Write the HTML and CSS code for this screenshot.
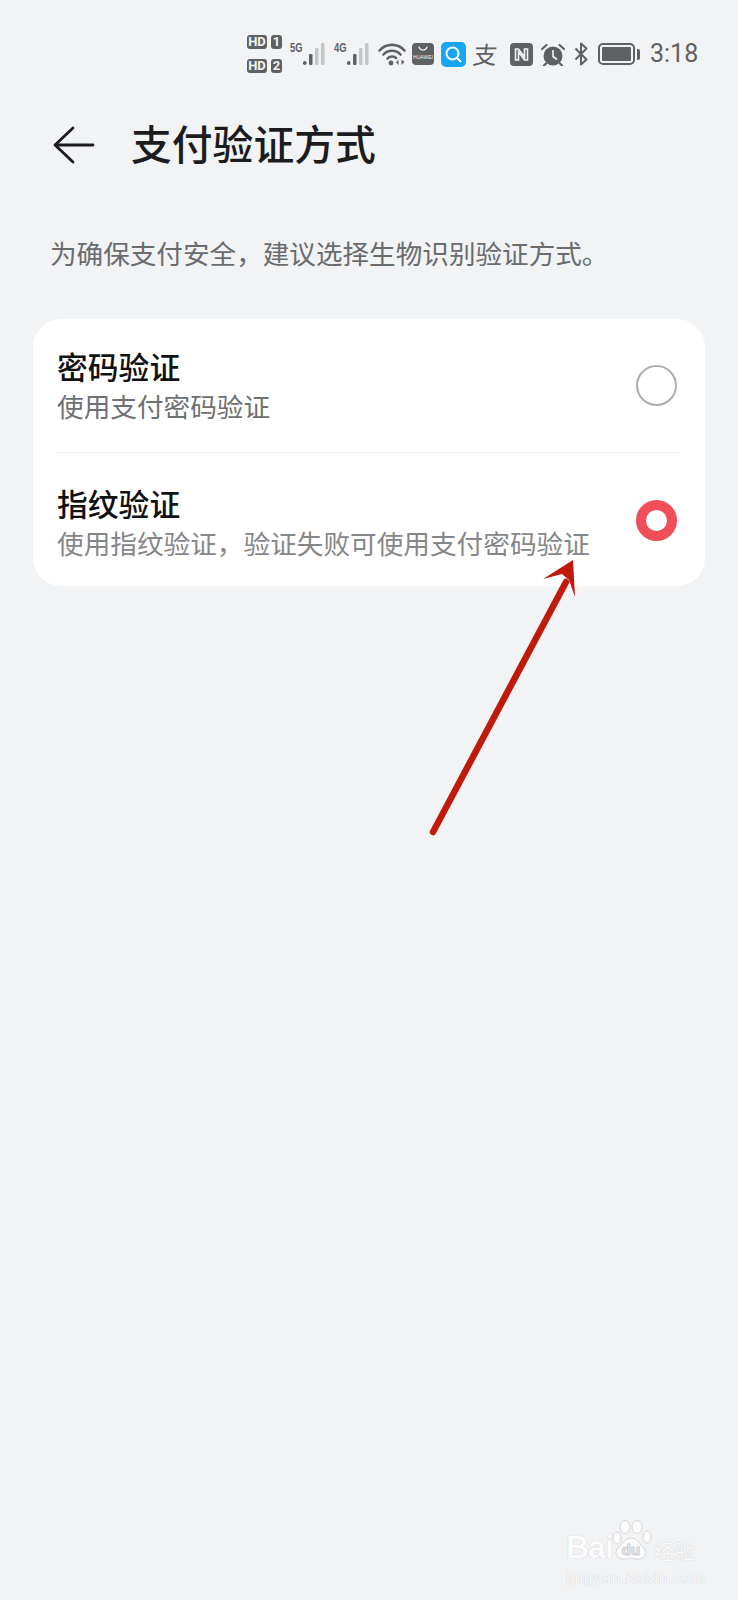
FILE: index.html
```html
<!DOCTYPE html>
<html lang="zh-CN">
<head>
  <meta charset="UTF-8">
  <meta name="viewport" content="width=device-width, initial-scale=1.0">
  <title>支付验证方式</title>
  <link rel="stylesheet" href="styles.css">
</head>
<body>

  <div class="status-bar">
    <div class="sims">
      <div class="sim"><span class="hd">HD</span><span class="num">1</span></div>
      <div class="sim"><span class="hd">HD</span><span class="num">2</span></div>
    </div>
    <div class="signal">
      <span class="net">5G</span>
      <svg width="25" height="24" viewBox="0 0 25 24">
        <rect x="1" y="19" width="3.5" height="4" rx="1.7" fill="#5f6062"/>
        <rect x="7" y="12" width="3.5" height="11" rx="1.2" fill="#5f6062"/>
        <rect x="13" y="6" width="3.5" height="17" rx="1.2" fill="#c4c5c7"/>
        <rect x="19" y="1" width="3.5" height="22" rx="1.2" fill="#c4c5c7"/>
      </svg>
    </div>
    <div class="signal second">
      <span class="net">4G</span>
      <svg width="25" height="24" viewBox="0 0 25 24">
        <rect x="1" y="19" width="3.5" height="4" rx="1.7" fill="#5f6062"/>
        <rect x="7" y="12" width="3.5" height="11" rx="1.2" fill="#5f6062"/>
        <rect x="13" y="6" width="3.5" height="17" rx="1.2" fill="#c4c5c7"/>
        <rect x="19" y="1" width="3.5" height="22" rx="1.2" fill="#c4c5c7"/>
      </svg>
    </div>
    <svg class="wifi" width="28" height="24" viewBox="0 0 28 24" fill="none" stroke="#5f6062" stroke-width="2.6" stroke-linecap="round">
      <path d="M1.5 8.5C8 1 20 1 26.5 8.5"/>
      <path d="M5.5 12.5C10 7.5 18 7.5 22.5 12.5"/>
      <path d="M9.5 16.5C11.5 14 16 14 18 16"/>
      <circle cx="13" cy="21" r="2.4" fill="#5f6062" stroke="none"/>
      <path d="M20.5 17.5v5.5L18 20.5zM23.5 23v-5.500L26.500 20z" fill="#5f6062" stroke="none"/>
    </svg>
    <div class="store">
      <svg width="10" height="5" viewBox="0 0 10 5" fill="none" stroke="#f1f3f5" stroke-width="1.2" stroke-linecap="round"><path d="M1 1c1 4 7 4 8 0"/></svg>
      <span>HUAWEI</span>
    </div>
    <div class="search">
      <svg width="17" height="17" viewBox="0 0 17 17" fill="none" stroke="#fff" stroke-width="2" stroke-linecap="round"><circle cx="7.500" cy="7.500" r="6"/><path d="M12 12l3.500 3.500"/></svg>
    </div>
    <span class="alipay">支</span>
    <div class="nfc">
      <svg width="15" height="17" viewBox="0 0 15 17" fill="none" stroke="#f1f3f5" stroke-width="1.600"><path d="M1.500 3v11h3V6l6 8h3V3h-3v8L4.500 3z"/></svg>
    </div>
    <svg class="alarm" width="24" height="23" viewBox="0 0 24 23">
      <circle cx="12" cy="13" r="9.500" fill="#5f6062"/>
      <path d="M12 7v6.500l4 3" fill="none" stroke="#f1f3f5" stroke-width="1.600"/>
      <path d="M1 6l4.500-4M23 6l-4.500-4M5 20.500l-2 2M19 20.500l2 2" fill="none" stroke="#5f6062" stroke-width="2.200" stroke-linecap="round"/>
    </svg>
    <svg class="bt" width="15" height="24" viewBox="0 0 15 24" fill="none" stroke="#5f6062" stroke-width="2" stroke-linejoin="round">
      <path d="M1.500 6.500l11 11-5.500 5V1.500l5.500 5-11 11"/>
    </svg>
    <div class="battery"><div class="level"></div></div>
    <div class="cap"></div>
    <span class="time">3:18</span>
  </div>

  <div class="title-bar">
    <svg class="back" width="42" height="38" viewBox="0 0 42 38" fill="none" stroke="#1c1c1e" stroke-width="2.800" stroke-linecap="round" stroke-linejoin="round">
      <path d="M20 2L2 19l18 17M2 19h38"/>
    </svg>
    <h1>支付验证方式</h1>
  </div>

  <p class="hint">为确保支付安全，建议选择生物识别验证方式。</p>

  <div class="card">
    <div class="row first">
      <div class="texts">
        <div class="name">密码验证</div>
        <div class="desc">使用支付密码验证</div>
      </div>
      <div class="radio"></div>
    </div>
    <div class="row second">
      <div class="texts">
        <div class="name">指纹验证</div>
        <div class="desc light">使用指纹验证，验证失败可使用支付密码验证</div>
      </div>
      <div class="radio on"></div>
    </div>
  </div>

  <!-- red annotation arrow drawn over the screenshot -->
  <svg class="arrow" width="170" height="300" viewBox="0 0 170 300">
    <path d="M13 282L146 32" fill="none" stroke="#bf1a0b" stroke-width="6.500" stroke-linecap="round"/>
    <path d="M153 10L123 29L142 24L149 30L155 47z" fill="#bf1a0b"/>
  </svg>

  <div class="watermark">
    <div class="mark-top">
      <span class="bai">Bai</span>
      <svg class="paw" width="44" height="46" viewBox="0 0 44 46" fill="#fbfbfc" stroke="#d5d7da" stroke-width="1">
        <ellipse cx="8" cy="18" rx="4" ry="6"/>
        <ellipse cx="16" cy="7" rx="5" ry="6.500"/>
        <ellipse cx="28" cy="7" rx="5" ry="6.500"/>
        <ellipse cx="38" cy="17" rx="4" ry="6"/>
        <path d="M22 18c6 0 8 5 12 9 5 5 2 13-6 12-3 0-4-1-6-1s-3 1-6 1c-8 1-12-7-6-12 4-3 6-9 12-9z"/>
        <text x="22" y="35" text-anchor="middle" class="du">du</text>
      </svg>
      <span class="jy">经验</span>
    </div>
    <div class="mark-url">jingyan.baidu.com</div>
  </div>

</body>
</html>
```

FILE: styles.css
```css
html, body { margin: 0; padding: 0; }
body { position: relative; width: 738px; height: 1600px; overflow: hidden; background: #f1f3f5; font-family: "Noto Sans CJK SC", Roboto, sans-serif; }

.status-bar { display: flex; align-items: center; height: 108px; padding-left: 247px; box-sizing: border-box; color: #5f6062; }
.sims { display: flex; flex-direction: column; gap: 10px; width: 43px; }
.sim { display: flex; gap: 4px; }
.hd, .num { display: block; height: 14px; background: #5f6062; color: #f1f3f5; border-radius: 3px; font: 700 13px/14px Roboto, sans-serif; text-align: center; }
.hd { width: 20px; }
.num { width: 11px; }
.signal { display: flex; align-items: flex-end; width: 37px; height: 24px; }
.signal.second { margin-left: 7px; }
.net { align-self: flex-start; width: 12px; font: 700 13px/12px "Liberation Sans", sans-serif; transform: scaleX(0.72); transform-origin: left; }
.wifi { margin-left: 7px; }
.store { display: flex; flex-direction: column; align-items: center; gap: 3px; width: 22px; height: 22px; margin-left: 6px; background: #5f6062; border-radius: 4px; box-sizing: border-box; padding-top: 3px; }
.store span { font: 400 5px/6px "Liberation Sans", sans-serif; color: #f1f3f5; white-space: nowrap; }
.search { display: flex; align-items: center; justify-content: center; width: 25px; height: 25px; margin-left: 7px; background: #17a5f5; border-radius: 5px; }
.alipay { width: 25px; margin-left: 7px; font-size: 24px; font-weight: 400; line-height: 24px; text-align: center; transform: skewX(-8deg); }
.nfc { display: flex; align-items: center; justify-content: center; width: 23px; height: 23px; margin-left: 12px; background: #5f6062; border-radius: 4px; }
.alarm { margin-left: 8px; }
.bt { margin-left: 9px; }
.battery { width: 37px; height: 22px; margin-left: 9px; padding: 2px; box-sizing: border-box; border: 2px solid #5f6062; border-radius: 5px; }
.level { height: 100%; background: #5f6062; border-radius: 1px; }
.cap { width: 3px; height: 11px; margin-left: 2px; background: #5f6062; border-radius: 0 2px 2px 0; }
.time { margin-left: 10px; font: 400 25px/30px Roboto, sans-serif; color: #5f6062; }

.title-bar { display: flex; align-items: center; gap: 36px; height: 70px; padding-left: 53px; }
.back { margin-top: 4px; }
.title-bar h1 { margin: 0; font-size: 40.800px; font-weight: 500; line-height: 70px; color: #1c1c1e; }

.hint { margin: 55px 0 0 50px; font-size: 26.600px; line-height: 40px; color: #6a6b6d; }

.card { margin: 46px 33px 0; padding: 0 24px; background: #fff; border-radius: 28px; }
.row { display: flex; justify-content: space-between; align-items: center; height: 133px; }
.row.first { height: 134px; border-bottom: 1px solid #e9eaec; box-sizing: border-box; }
.row.second .texts { padding-top: 6px; }
.name { font-size: 30.800px; font-weight: 500; line-height: 40px; color: #111; }
.desc { font-size: 26.650px; line-height: 40px; color: #6f7072; white-space: nowrap; }
.desc.light { color: #858688; }
.radio { width: 41px; height: 41px; box-sizing: border-box; border: 2.500px solid #adadad; border-radius: 50%; margin-right: 4px; }
.radio.on { margin-top: 2px; border: 10px solid #f04f5a; background: #fff; }

.arrow { position: absolute; left: 420px; top: 550px; }

.watermark { position: absolute; left: 566px; top: 1520px; width: 140px; color: #fbfbfc; text-shadow: 0 0 1px #b9bbbe; }
.mark-top { display: flex; align-items: flex-end; height: 46px; }
.bai { font: 700 32px/36px "Liberation Sans", sans-serif; letter-spacing: -1px; margin-bottom: 1px; }
.paw { flex: none; margin-left: -4px; }
.du { font: 700 15px "Liberation Sans", sans-serif; fill: #f1f3f5; stroke: #c5c7ca; stroke-width: 0.400; }
.jy { font-size: 21px; line-height: 32px; margin-left: 1px; white-space: nowrap; }
.mark-url { margin-top: 4px; font: 400 16px/18px "Liberation Sans", sans-serif; letter-spacing: 0.600px; white-space: nowrap; }
```
